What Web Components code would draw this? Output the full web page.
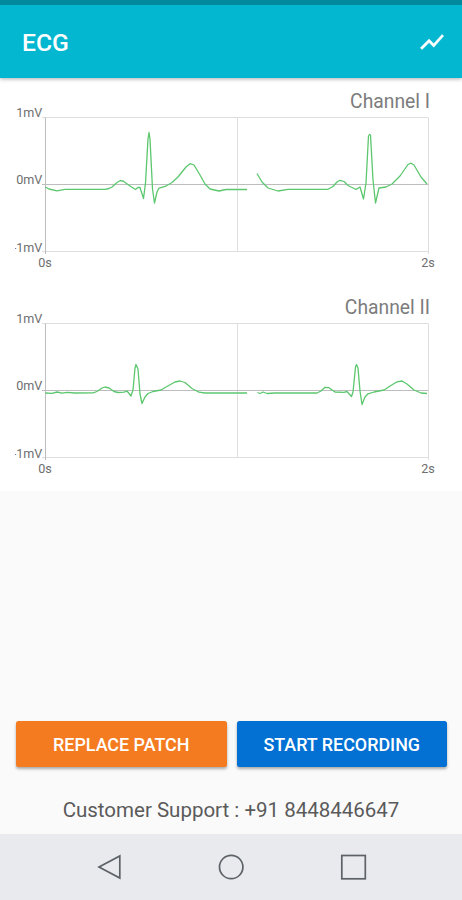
<!DOCTYPE html>
<html lang="en">
<head>
<meta charset="utf-8">
<title>ECG</title>
<style>
html, body { margin: 0; height: 100%; }
body { font-family: Roboto, "Liberation Sans", sans-serif; background: #fafafa; overflow: hidden; }
</style>
</head>
<body>
<ecg-screen></ecg-screen>
<script>
class Base extends HTMLElement {
  constructor() {
    super();
    this.attachShadow({ mode: 'open' });
  }
  connectedCallback() { this.shadowRoot.innerHTML = this.render(); }
}

customElements.define('app-bar', class extends Base {
  render() {
    return `<style>
      :host { display: flex; align-items: center; justify-content: space-between; box-sizing: border-box;
        height: 78px; padding: 0 16px 0 22px; border-top: 5px solid #018a9d;
        background: #04b7d0; color: #fff; position: relative; z-index: 1;
        box-shadow: 0 1px 4px rgba(0,0,0,.32); }
      h1 { margin: 2px 0 0; font-size: 24.7px; line-height: 30px; font-weight: 500; }
      svg { display: block; width: 28px; height: 28px; }
    </style>
    <h1><slot></slot></h1>
    <svg viewBox="0 0 24 24" fill="#fff" stroke="#fff" stroke-width=".4"><path d="M3.5 18.49l6-6.01 4 4L22 6.92l-1.41-1.41-7.09 7.97-4-4L2 16.99z"/></svg>`;
  }
});

customElements.define('ecg-channel', class extends Base {
  render() {
    const traces = this.getAttribute('traces').split('|')
      .map(p => `<polyline class="trace" points="${p.trim()}"/>`).join('');
    return `<style>
      :host { display: block; height: 206px; }
      h2 { margin: 0; padding: 12px 32px 0 0; height: 24px; box-sizing: content-box; text-align: right;
        font-size: 19.3px; line-height: 24px; font-weight: 400; color: #7c7c7c; }
      svg { display: block; margin: -14px 0 0 15px; overflow: hidden; }
      text { font-size: 12.6px; fill: #6e6e6e; }
      .grid { stroke: #dedede; stroke-width: 1; fill: none; }
      .axis { stroke: #bdbdbd; stroke-width: 1; fill: none; }
      .trace { stroke: #5cc76e; stroke-width: 1.3; fill: none; stroke-linejoin: round; }
    </style>
    <h2><slot></slot></h2>
    <svg width="447" height="170" viewBox="15 -13 447 170">
      <path class="grid" d="M42 4.5H428.500V141M42 138.500H428.500M237.500 4.500V138.500"/>
      <path class="axis" d="M45.500 4.500V141M42 71.500H428.500"/>
      ${traces}
      <text x="42.300" y="4" text-anchor="end">1mV</text>
      <text x="42.300" y="71" text-anchor="end">0mV</text>
      <text x="42.300" y="138.500" text-anchor="end">-1mV</text>
      <text x="45" y="153.500" text-anchor="middle">0s</text>
      <text x="428" y="153.500" text-anchor="middle">2s</text>
    </svg>`;
  }
});

customElements.define('action-button', class extends Base {
  render() {
    return `<style>
      :host { display: block; flex: 1; }
      button { display: block; width: 100%; height: 46px; border: 0; border-radius: 2.500px; padding: 1px 0 0;
        background: var(--fill); color: #fff; font: 500 17.9px Roboto, "Liberation Sans", sans-serif;
        white-space: nowrap; box-shadow: 0 2px 3px rgba(0,0,0,.32); }
    </style>
    <button><slot></slot></button>`;
  }
});

customElements.define('nav-bar', class extends Base {
  render() {
    return `<style>
      :host { display: flex; justify-content: center; gap: 94px; align-items: center; height: 66px; background: #e8eaee; }
      svg { display: block; width: 28px; height: 28px; fill: none; stroke: #5d6266; stroke-width: 1.700; }
    </style>
    <svg viewBox="0 0 28 28"><path d="M24.800 2.900V25L4 14z"/></svg>
    <svg viewBox="0 0 28 28"><circle cx="14.200" cy="14" r="11.700"/></svg>
    <svg viewBox="0 0 28 28"><rect x="2.800" y="2.500" width="23.500" height="23.300"/></svg>`;
  }
});

/* Trace points: x in screen units, y relative to the chart with 71.5 as 0 mV. */
const CH1 = '45.3,74 49,76 57,77.8 65,76.300 105,76.300 109,75.500 112,74 117,69.500 120,67.700 123,68 130,73 135.500,76.500 138,74.500 140,74.500 143.500,85.500 145.500,70 148,26 149,19.500 150,26 152.500,76 154.500,90 157,79 159,75 166,73 172,69.500 178,64 186,54 190,50.700 194,52 200,62 205,71 210,76 219,78 226,76.500 247,76.500'
 + '|257,60.500 262,69 268,75 278,78 288,76.300 328,76.300 333,73.500 337,69 340,67.300 344,68.500 348,72.500 356,76.500 360,74 363.500,86 366,70 368.500,23 369.500,21.500 370.500,22 373,67 375.500,90 379,75 386,74 392,71 400,63 408,51.500 411,50.200 414,52 421,64 427,71';
const CH2 = '45.3,74 52,74.300 57,73 62,74.200 67,73.300 75,74 93,73.800 97,72.500 102,69 105,68 109,69 114,72.500 118,73.500 124,73.200 127,72 131,77 133,71 135,49 136,45.500 138,50 140,75 142,84.500 145,78 148,74.500 153,72.500 161,71 167,67.500 175,63 180,62 185,63.500 192,69.500 199,73.200 205,74 247,74'
 + '|257.500,73.500 260,74.500 263,73 267,74.500 275,74 317,74 321,72 325,68.300 329,68.700 335,73 344,73.300 347,72.500 351.500,77.500 353,73 355.500,48 356.500,45.500 358,49 360,72 362,85.500 365,78 368,74.800 374,73 384,71 391,66.500 397,62.800 402,62 407,65 414,71 421,74 427,74.500';

customElements.define('ecg-screen', class extends Base {
  render() {
    return `<style>
      :host { display: flex; flex-direction: column; width: 100%; height: 900px; background: #fafafa; }
      main { background: #fff; height: 413px; }
      .spacer { flex: 1; }
      .actions { display: flex; gap: 10px; padding: 0 15px 0 16px; }
      p { margin: 30px 0 10px; text-align: center; font-size: 20.500px; line-height: 27px; color: #5a5a5a; white-space: nowrap; }
    </style>
    <app-bar>ECG</app-bar>
    <main>
      <ecg-channel traces="${CH1}">Channel I</ecg-channel>
      <ecg-channel traces="${CH2}">Channel II</ecg-channel>
    </main>
    <div class="spacer"></div>
    <div class="actions">
      <action-button style="--fill:#f47b20">REPLACE PATCH</action-button>
      <action-button style="--fill:#0271d3">START RECORDING</action-button>
    </div>
    <p>Customer Support : +91 8448446647</p>
    <nav-bar></nav-bar>`;
  }
});
</script>
</body>
</html>
